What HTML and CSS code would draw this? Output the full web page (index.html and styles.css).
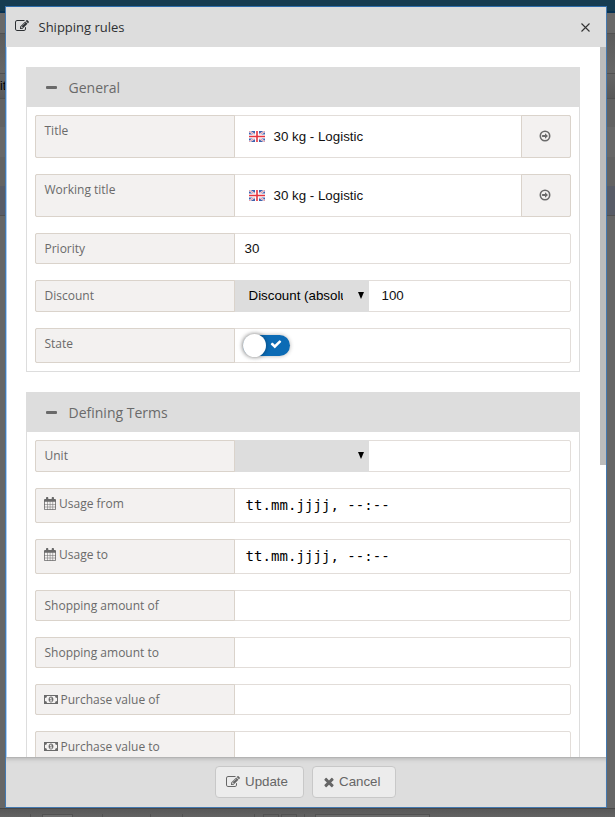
FILE: index.html
```html
<!DOCTYPE html>
<html lang="en">
<head>
<meta charset="utf-8">
<title>Shipping rules</title>
<link rel="stylesheet" href="styles.css">
</head>
<body>
<svg class="defs" width="0" height="0" aria-hidden="true">
  <symbol id="edit" viewBox="0 0 1792 1792"><path d="M888 1184l116-116-152-152-116 116v56h96v96h56zm440-720q-16-16-33 1l-350 350q-17 17-1 33t33-1l350-350q17-17 1-33zm80 594v190q0 119-84.5 203.5t-203.5 84.5h-832q-119 0-203.5-84.5t-84.5-203.5v-832q0-119 84.5-203.5t203.5-84.5h832q63 0 117 25 15 7 18 23 3 17-9 29l-49 49q-14 14-32 8-23-6-45-6h-832q-66 0-113 47t-47 113v832q0 66 47 113t113 47h832q66 0 113-47t47-113v-126q0-13 9-22l64-64q15-15 35-7t20 29zm-96-738l288 288-672 672h-288v-288zm444 132l-92 92-288-288 92-92q28-28 68-28t68 28l152 152q28 28 28 68t-28 68z"/></symbol>
  <symbol id="times" viewBox="0 0 1792 1792"><path d="M1490 1322q0 40-28 68l-136 136q-28 28-68 28t-68-28l-294-294-294 294q-28 28-68 28t-68-28l-136-136q-28-28-28-68t28-68l294-294-294-294q-28-28-28-68t28-68l136-136q28-28 68-28t68 28l294 294 294-294q28-28 68-28t68 28l136 136q28 28 28 68t-28 68l-294 294 294 294q28 28 28 68z"/></symbol>
  <symbol id="check" viewBox="0 0 1792 1792"><path d="M1671 566q0 40-28 68l-724 724-136 136q-28 28-68 28t-68-28l-136-136-362-362q-28-28-28-68t28-68l136-136q28-28 68-28t68 28l294 295 656-657q28-28 68-28t68 28l136 136q28 28 28 68z"/></symbol>
  <symbol id="calendar" viewBox="0 0 12 13"><path fill-rule="evenodd" d="M1 2h1V1a1 1 0 0 1 2.300 0v1h3.400V1A1 1 0 0 1 10 1v1h1a1 1 0 0 1 1 1v9a1 1 0 0 1-1 1H1a1 1 0 0 1-1-1V3a1 1 0 0 1 1-1zM.8 4.800v2.200H3V4.800zm2.700 0v2.200h2.300V4.800zm2.800 0v2.200h2.300V4.800zM9.100 4.800v2.200h2.100V4.800zM.8 7.500v2.200H3V7.500zm2.700 0v2.200h2.300V7.500zm2.800 0v2.200h2.300V7.500zm2.800 0v2.200h2.100V7.500zM.8 10.200v2H3v-2zm2.700 0v2h2.300v-2zm2.800 0v2h2.300v-2zm2.800 0v2h2.100v-2z"/></symbol>
  <symbol id="money" viewBox="0 0 14 9"><path fill-rule="evenodd" d="M0 0h14v9H0zM3 1a2 2 0 0 1-2 2v3a2 2 0 0 1 2 2h8a2 2 0 0 1 2-2V3a2 2 0 0 1-2-2z"/><path fill-rule="evenodd" d="M7 1.500c1.500 0 2.400 1.400 2.400 3S8.500 7.500 7 7.500 4.600 6.100 4.600 4.500 5.500 1.500 7 1.500zM6.700 2.500l-1.100.9.500.6.500-.3V5.600H5.800v.8h2.400v-.8h-.7V2.500z"/></symbol>
  <symbol id="go" viewBox="0 0 12 12"><circle cx="6" cy="6" r="4.700" fill="none" stroke="currentColor" stroke-width="1.600"/><path d="M3.100 5H6V3.200L9 6 6 8.800V7H3.100z"/></symbol>
  <symbol id="flag" viewBox="0 0 16 11"><path fill="#3f62ad" d="M0 0h16v11H0z"/><path stroke="#e8e9f4" stroke-width="2" d="M0 0l16 11M16 0L0 11"/><path stroke="#e4737c" stroke-width=".7" d="M0 0l16 11M16 0L0 11"/><path fill="#fff" d="M6 0h4v11H6zM0 3.500h16v4H0z"/><path fill="#e5343f" d="M7.200 0h1.600v11H7.200zM0 4.800h16v1.400H0z"/></symbol>
</svg>
<div class="page">
  <div class="backdrop">
    <div class="topbar"></div>
    <div class="strip strip-a"></div>
    <div class="strip strip-b"></div>
    <div class="strip strip-c">it</div>
    <div class="strip strip-d"></div>
    <div class="strip strip-e"></div>
    <div class="strip strip-f"></div>
    <div class="strip strip-g"></div>
    <div class="strip rest"></div>
    <div class="bottombar"><i class="tick"></i><i class="b1"></i><i class="tick t2"></i><i class="tick t3"></i><i class="tick t4"></i><i class="tick t5"></i><i class="b2"></i><i class="b3"></i><i class="tick t6"></i><i class="b4"></i></div>
  </div>
  <main class="dialog">
    <header class="dialog-head">
      <svg class="icon"><use href="#edit"/></svg>
      <h1>Shipping rules</h1>
      <svg class="close" viewBox="0 0 9 9"><path d="M.5.500l8 8M8.500.500l-8 8"/></svg>
    </header>
    <div class="dialog-body">
      <section class="panel">
        <h2>General</h2>
        <div class="rows">
          <div class="row tall"><label>Title</label><div class="field lang"><svg class="flag"><use href="#flag"/></svg>30 kg - Logistic</div><div class="go"><svg><use href="#go"/></svg></div></div>
          <div class="row tall"><label>Working title</label><div class="field lang"><svg class="flag"><use href="#flag"/></svg>30 kg - Logistic</div><div class="go"><svg><use href="#go"/></svg></div></div>
          <div class="row"><label>Priority</label><div class="field">30</div></div>
          <div class="row choice"><label>Discount</label><div class="select"><span>Discount (absolute)</span><b></b></div><div class="field amount">100</div></div>
          <div class="row mid"><label>State</label><div class="field state"><div class="switch"><div class="knob"></div><svg><use href="#check"/></svg></div></div></div>
        </div>
      </section>
      <section class="panel">
        <h2>Defining Terms</h2>
        <div class="rows">
          <div class="row choice"><label>Unit</label><div class="select"><span></span><b></b></div><div class="field amount"></div></div>
          <div class="row mid"><label><svg class="calendar"><use href="#calendar"/></svg>Usage from</label><div class="field date">tt.mm.jjjj, --:--</div></div>
          <div class="row mid"><label><svg class="calendar"><use href="#calendar"/></svg>Usage to</label><div class="field date">tt.mm.jjjj, --:--</div></div>
          <div class="row"><label>Shopping amount of</label><div class="field"></div></div>
          <div class="row"><label>Shopping amount to</label><div class="field"></div></div>
          <div class="row"><label><svg class="money"><use href="#money"/></svg>Purchase value of</label><div class="field"></div></div>
          <div class="row"><label><svg class="money"><use href="#money"/></svg>Purchase value to</label><div class="field"></div></div>
        </div>
      </section>
      <div class="scroll-thumb"></div>
    </div>
    <footer class="dialog-foot">
      <button class="update"><svg><use href="#edit"/></svg>Update</button>
      <button class="cancel"><svg><use href="#times"/></svg>Cancel</button>
    </footer>
  </main>
</div>
</body>
</html>
```
FILE: styles.css
```css
* { box-sizing: border-box; }
body { margin: 0; overflow: hidden; font-family: "Open Sans", sans-serif; font-size: 13px; color: #6a6a6a; }
svg { fill: currentColor; flex: none; display: block; }
.defs { position: absolute; }
h1, h2 { margin: 0; font-weight: 400; }

.page { position: relative; width: 615px; height: 817px; overflow: hidden; }
.backdrop { height: 817px; display: flex; flex-direction: column; background: #666; }
.topbar { height: 13px; background: #163c51; border-bottom: 2px solid #073253; }
.strip { border-bottom: 1px solid #515151; }
.strip-a { height: 21px; background: #696969; }
.strip-b { height: 40px; background: linear-gradient(#5c5c5c, #666); }
.strip-c { height: 25px; background: linear-gradient(#656565, #595959); color: #000; font: 12px/24px "Liberation Sans", sans-serif; }
.strip-d { height: 28px; background: #626262; border: 0; }
.strip-e { height: 30px; background: #686868; border: 0; }
.strip-f { height: 29px; background: #636363; border: 0; }
.strip-g { height: 30px; background: #585c67; }
.rest { flex: 1; border: 0; }
.bottombar { display: flex; height: 9px; border-top: 1px solid #484848; background: linear-gradient(#585858, #636363); padding: 5px 0 0 30px; }
.bottombar i { height: 4px; border: 1px solid #525252; border-bottom: 0; }
.bottombar .tick { width: 1px; border-width: 0 0 0 1px; }
.b1 { width: 31px; margin-left: 11px; background: #6d6d6d; }
.t2 { margin-left: 29px; }
.t3 { margin-left: 47px; }
.t4 { margin-left: 31px; }
.t5 { margin-left: 71px; }
.b2 { width: 16px; margin-left: 8px; }
.b3 { width: 16px; margin-left: 2px; }
.t6 { margin-left: 7px; }
.b4 { width: 115px; margin-left: 10px; background: #6b6b6b; }

.dialog { position: absolute; left: 5px; top: 6px; width: 602px; height: 802px; border: 1px solid #4479b0; border-top-color: #2d6cab; display: flex; flex-direction: column; background: #fff; }
.dialog-head { height: 40px; flex: none; display: flex; align-items: center; background: #ddd; color: #2d3033; padding: 0 16px 0 9px; }
.dialog-head .icon { width: 14px; height: 14px; margin-top: -2px; }
.dialog-head h1 { font-size: 13px; line-height: 20px; margin-left: 9.500px; flex: 1; }
.close { width: 9px; height: 9px; fill: none; stroke: #333; stroke-width: 1.100; }
.dialog-body { position: relative; flex: 1; min-height: 0; overflow: hidden; padding: 20px 26px 0 19px; border-left: 1px solid #a9cdf2; }
.scroll-thumb { position: absolute; top: 0; right: 0; width: 6px; height: 418px; background: #bcbcbc; }

.panel { border: 1px solid #ddd; border-top: 0; margin-bottom: 20px; }
.panel h2 { height: 40px; margin: 0 -1px; background: #ddd; display: flex; align-items: center; font-size: 14px; line-height: 20px; padding: 1px 0 0 20px; }
.panel h2::before { content: ""; width: 11px; height: 3px; border-radius: 1px; background: #6a6a6a; margin-right: 11.500px; }
.rows { display: flex; flex-direction: column; gap: 16px; padding: 8px; }
.row { display: flex; height: 31px; border: 1px solid #e2ddd9; border-radius: 2px; }
.row.tall { height: 43px; }
.row.choice { height: 32px; }
.row.mid { height: 35px; }
label { display: flex; align-items: flex-start; width: 200px; flex: none; margin: -1px 0 -1px -1px; border: 1px solid #dad3cb; border-radius: 2px 0 0 2px; background: #f3f1f0; padding: 5px 8px 0 8.500px; font-size: 12px; line-height: 20px; }
.field { flex: 1; display: flex; align-items: center; padding-left: 9.500px; color: #111; font: 13.330px "Liberation Sans", sans-serif; }
.lang { padding-left: 14px; }
.flag { width: 16px; height: 11px; margin-right: 8.500px; }
.go { width: 50px; margin: -1px -1px -1px 0; display: flex; align-items: center; justify-content: center; border: 1px solid #dad3cb; border-radius: 0 2px 2px 0; background: #f3f1f0; padding: 0 2px 2px 0; }
.go svg { width: 12px; height: 12px; }
.select { width: 134px; margin: -1px 0; background: #ddd; display: flex; align-items: center; padding: 0 0 1px 13.500px; color: #000; font: 13.330px "Liberation Sans", sans-serif; }
.select span { width: 94.500px; overflow: hidden; white-space: nowrap; }
.select b { margin-left: 15px; border: 3px solid transparent; border-top: 7px solid #000; border-bottom: 0; }
.amount { padding: 0 0 1px 12.500px; }
.state { padding-left: 8px; }
.switch { display: flex; align-items: center; width: 47px; height: 21px; border-radius: 11px; background: #0c6bb5; box-shadow: 0 0 4px rgba(0,0,0,.3); }
.knob { width: 23px; height: 23px; border-radius: 50%; background: #fff; box-shadow: 0 0 5px rgba(0,0,0,.4); flex: none; }
.switch svg { width: 12px; height: 12px; color: #fff; margin: -4px 0 0 4px; }
.date { font: 14px "DejaVu Sans Mono", monospace; padding: 0 0 2px 10.500px; letter-spacing: .06px; color: #000; }
.calendar { width: 12px; height: 13px; margin: 3px 3px 0 -.5px; }
.money { width: 14px; height: 9px; margin: 5px 2.500px 0 -.5px; }

.dialog-foot { position: relative; height: 50px; flex: none; display: flex; justify-content: center; gap: 8px; padding: 9px 1px 0 0; background: #ddd; box-shadow: inset 0 1px 0 #b4b4b4, inset 0 5px 4px -3px #b5b5b5; }
button { height: 32px; display: flex; align-items: center; border: 1px solid #c8c8c8; border-radius: 4px; background: #ececec; color: #666; padding: 0 0 1px 10px; font: 13.330px "Liberation Sans", sans-serif; }
button svg { width: 14px; height: 14px; margin-right: 5px; }
.update { width: 89px; }
.cancel { width: 84px; padding-left: 9px; }
.cancel svg { margin: 1px 3px 0 0; }
```
